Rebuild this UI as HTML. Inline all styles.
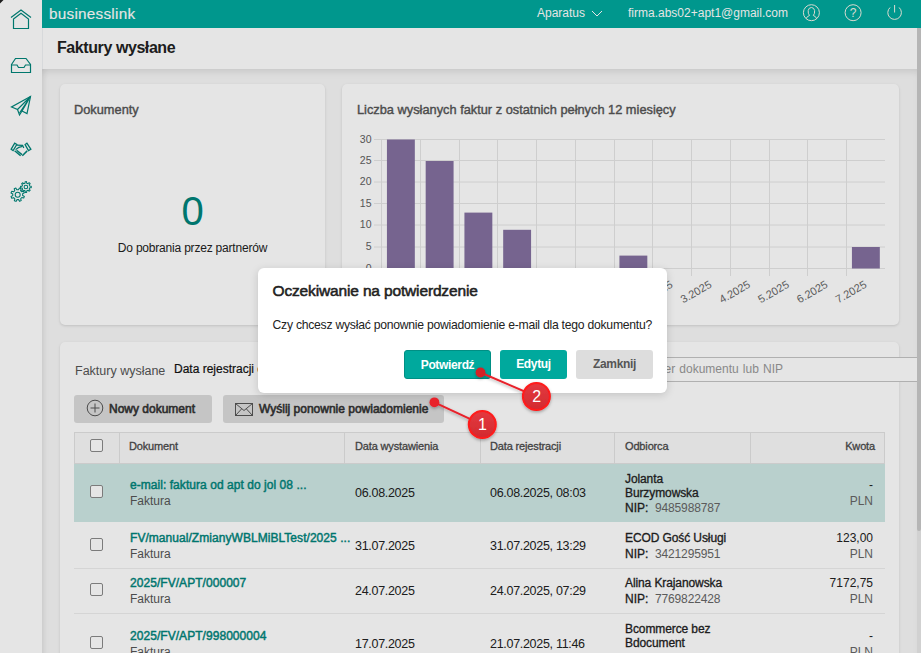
<!DOCTYPE html>
<html><head><meta charset="utf-8">
<style>
*{box-sizing:border-box;margin:0;padding:0}
html,body{width:921px;height:653px;overflow:hidden}
body{position:relative;background:#f6f6f6;font-family:"Liberation Sans",sans-serif;color:#222}
.abs{position:absolute}
.t{position:absolute;white-space:nowrap}
.m{-webkit-text-stroke:0.35px currentColor}
#sidebar{left:0;top:0;width:42px;height:653px;background:#fff}
#header{left:42px;top:0;width:879px;height:28px;background:#00a99d}
#logo{left:49px;top:5px;font-size:15.3px;letter-spacing:0.25px;color:#fff;-webkit-text-stroke:0.15px #fff}
#titlebar{left:42px;top:28px;width:875px;height:41px;background:#fff;border-left:1px solid #f0f2f4}
#title{left:57px;top:39px;font-size:16px;letter-spacing:-0.42px;font-weight:bold;color:#222}
#content{left:42px;top:69px;width:875px;height:584px;background:#f8f8f8;box-shadow:inset 0 6px 8px -4px rgba(0,0,0,.12), inset 8px 0 6px -6px rgba(0,0,0,.08)}
.card{position:absolute;background:#fff;border-radius:5px;box-shadow:0 1px 3px rgba(0,0,0,.14)}
#thumb{left:917px;top:28px;width:4px;height:503px;background:#cacaca;border-radius:0 0 2px 2px}
.h3{position:absolute;font-size:12.8px;-webkit-text-stroke:0.4px #555;color:#555;white-space:nowrap}
#overlay{left:0;top:0;width:921px;height:653px;background:rgba(0,0,0,.1)}
#dialog{left:258px;top:268px;width:409px;height:125px;background:#fff;border-radius:6px;box-shadow:0 2px 8px rgba(0,0,0,.15)}
.btn{position:absolute;height:29px;border-radius:3px;font-size:12px;font-weight:bold;letter-spacing:-0.35px;text-align:center;line-height:29px;white-space:nowrap}
.teal{background:#00a99d;color:#fff}
svg text{font-family:"Liberation Sans",sans-serif}
.g{stroke:#e6e6e6;stroke-width:1}
.yl{font-size:10.5px;fill:#606060;text-anchor:end}
.xl{font-size:11px;fill:#666;text-anchor:end;dominant-baseline:middle}
.b{fill:#8470a0}
.cb{position:absolute;width:13px;height:13px;border:1px solid #8a8a8a;border-radius:2px;background:#fff}
.th{position:absolute;top:440px;font-size:11px;letter-spacing:-0.15px;-webkit-text-stroke:0.3px #4a4a4a;color:#4a4a4a;white-space:nowrap}
.link{font-size:12px;letter-spacing:0.05px;color:#00847b;-webkit-text-stroke:0.45px #00847b}
.sub{font-size:12px;color:#555}
.cell{font-size:12.5px;letter-spacing:-0.3px;color:#222}
.nm{font-size:12px;letter-spacing:-0.1px;color:#222;-webkit-text-stroke:0.3px #222;line-height:14px}
.nip{font-size:12px;color:#222}
.nip b{font-weight:normal;-webkit-text-stroke:0.3px #222}
.nip span{color:#666;letter-spacing:-0.15px;margin-left:0px}
.amt{font-size:12px;color:#222;text-align:right;width:123px;left:750px}
.amt span{color:#666}
</style></head><body>
<div id="sidebar" class="abs">
 <svg class="abs" style="left:0;top:0" width="42" height="220" viewBox="0 0 42 220" fill="none" stroke="#00857a" stroke-width="1.2">
  <path d="M0 0 L3.5 0 L0 3.5 Z" fill="#222" stroke="none"/>
  <path d="M11 17.5 L21 10 L31 17.5"/>
  <path d="M13.5 19 L21 13.3 L28.5 19 V28.5 H13.5 Z"/>
  <path d="M11.5 64.5 L15.5 58.5 H26 L30.5 64.5 V72.5 H11.5 Z"/>
  <path d="M11.5 65 H17 L18.5 67.5 H24 L25.5 65 H30.5"/>
  <path d="M30.5 96.5 L11.5 107 L17.5 109.5 L19.5 115 L22 111 L27 113.5 Z"/>
  <path d="M30.5 96.5 L17.5 109.5 M30.5 96.5 L19.5 113 M30.5 96.5 L22 111"/>
  <path d="M11.2 149.2 L14.7 143.2 L16.8 144.5 L13.1 150.5 Z M30.8 149.2 L26.9 143.2 L25.1 144.6 L28.5 150.5 Z" stroke-width="1.3"/>
  <path d="M16.8 145.1 L22.6 145.4 L23.8 148"/>
  <path d="M15.6 149.6 Q18.5 146.8 22.6 146.4"/>
  <path d="M14.6 150.8 L20.6 155.8 M16.6 150.2 L22 154.6" stroke-width="1.4"/>
  <path d="M27.2 150.9 L22.3 155.8" stroke-width="1.5"/>
  <g stroke-width="1.05"><path d="M18.48 189.76 L19.42 188.02 L21.07 188.68 L20.54 190.59 L21.75 191.76 L23.64 191.19 L24.34 192.83 L22.62 193.80 L22.64 195.48 L24.38 196.42 L23.72 198.07 L21.81 197.54 L20.64 198.75 L21.21 200.64 L19.57 201.34 L18.60 199.62 L16.92 199.64 L15.98 201.38 L14.33 200.72 L14.86 198.81 L13.65 197.64 L11.76 198.21 L11.06 196.57 L12.78 195.60 L12.76 193.92 L11.02 192.98 L11.68 191.33 L13.59 191.86 L14.76 190.65 L14.19 188.76 L15.83 188.06 L16.80 189.78 Z" stroke-linejoin="round"/><circle cx="17.7" cy="194.7" r="2.5"/></g><g stroke-width="1.05"><path d="M24.99 183.21 L25.14 181.65 L26.53 181.64 L26.72 183.19 L27.94 183.67 L29.14 182.68 L30.14 183.66 L29.18 184.88 L29.69 186.09 L31.25 186.24 L31.26 187.63 L29.71 187.82 L29.23 189.04 L30.22 190.24 L29.24 191.24 L28.02 190.28 L26.81 190.79 L26.66 192.35 L25.27 192.36 L25.08 190.81 L23.86 190.33 L22.66 191.32 L21.66 190.34 L22.62 189.12 L22.11 187.91 L20.55 187.76 L20.54 186.37 L22.09 186.18 L22.57 184.96 L21.58 183.76 L22.56 182.76 L23.78 183.72 Z" stroke-linejoin="round"/><circle cx="25.9" cy="187" r="1.8"/></g>
 </svg>
</div>
<div id="header" class="abs"></div>
<div id="logo" class="abs">businesslink</div>
<div class="t" style="left:537px;top:6px;font-size:12px;color:#fff">Aparatus</div>
<svg class="abs" style="left:590px;top:8px" width="14" height="10"><path d="M2 3 L7 8 L12 3" fill="none" stroke="#fff" stroke-width="1"/></svg>
<div class="t" style="left:628px;top:6px;font-size:12px;color:#fff">firma.abs02+apt1@gmail.com</div>
<svg class="abs" style="left:795px;top:0" width="126" height="28" fill="none" stroke="#f4f4e8" stroke-width="1">
 <circle cx="16.4" cy="12.7" r="8"/>
 <path d="M11.2 18.6 Q12 16.2 14.5 15.5 Q12.8 13.5 13.2 10.5 Q13.8 7.5 16.4 7.5 Q19 7.5 19.6 10.5 Q20 13.5 18.3 15.5 Q20.8 16.2 21.6 18.6"/>
 <circle cx="58.1" cy="12.7" r="8"/>
 <text x="58.1" y="17" font-size="12" text-anchor="middle" fill="#f4f4e8" stroke="none">?</text>
 <path d="M95.1 7.5 A6.8 6.8 0 1 0 104.1 7.5"/>
 <path d="M99.6 5 V12.5"/>
</svg>
<div id="titlebar" class="abs"></div>
<div id="title" class="abs">Faktury wysłane</div>
<div id="content" class="abs"></div>
<div class="abs" style="left:917px;top:28px;width:4px;height:625px;background:#e9e9e9"></div>
<div id="thumb" class="abs"></div>

<div class="card" style="left:60px;top:84px;width:265px;height:241px"></div>
<div class="h3" style="left:74px;top:102px">Dokumenty</div>
<div class="t" style="left:60px;width:265px;top:189px;text-align:center;font-size:40px;color:#00847b">0</div>
<div class="t" style="left:60px;width:265px;top:241px;text-align:center;font-size:12px;letter-spacing:-0.2px;color:#222">Do pobrania przez partnerów</div>

<div class="card" style="left:342px;top:84px;width:557px;height:241px"></div>
<div class="h3" style="left:357px;top:102px">Liczba wysłanych faktur z ostatnich pełnych 12 miesięcy</div>
<svg class="abs" style="left:0;top:0" width="921" height="653">
<line x1="374" y1="139.5" x2="885" y2="139.5" class="g"/>
<text x="371.5" y="142.5" class="yl">30</text>
<line x1="374" y1="160.5" x2="885" y2="160.5" class="g"/>
<text x="371.5" y="163.5" class="yl">25</text>
<line x1="374" y1="182" x2="885" y2="182" class="g"/>
<text x="371.5" y="185" class="yl">20</text>
<line x1="374" y1="203.5" x2="885" y2="203.5" class="g"/>
<text x="371.5" y="206.5" class="yl">15</text>
<line x1="374" y1="225" x2="885" y2="225" class="g"/>
<text x="371.5" y="228" class="yl">10</text>
<line x1="374" y1="247" x2="885" y2="247" class="g"/>
<text x="371.5" y="250" class="yl">5</text>
<line x1="374" y1="268.5" x2="885" y2="268.5" class="g"/>
<text x="371.5" y="271.5" class="yl">0</text>
<line x1="381.5" y1="139" x2="381.5" y2="276" class="g"/>
<line x1="420.5" y1="139" x2="420.5" y2="276" class="g"/>
<line x1="459.5" y1="139" x2="459.5" y2="276" class="g"/>
<line x1="497.5" y1="139" x2="497.5" y2="276" class="g"/>
<line x1="536.5" y1="139" x2="536.5" y2="276" class="g"/>
<line x1="575.5" y1="139" x2="575.5" y2="276" class="g"/>
<line x1="614.5" y1="139" x2="614.5" y2="276" class="g"/>
<line x1="652.5" y1="139" x2="652.5" y2="276" class="g"/>
<line x1="691.5" y1="139" x2="691.5" y2="276" class="g"/>
<line x1="730.5" y1="139" x2="730.5" y2="276" class="g"/>
<line x1="769.5" y1="139" x2="769.5" y2="276" class="g"/>
<line x1="807.5" y1="139" x2="807.5" y2="276" class="g"/>
<line x1="846.5" y1="139" x2="846.5" y2="276" class="g"/>
<rect x="386.93" y="139.5" width="27.9" height="129.0" class="b"/>
<rect x="425.68" y="161.0" width="27.9" height="107.5" class="b"/>
<rect x="464.43" y="212.6" width="27.9" height="55.9" class="b"/>
<rect x="503.18" y="229.8" width="27.9" height="38.7" class="b"/>
<rect x="619.42" y="255.6" width="27.9" height="12.9" class="b"/>
<rect x="851.92" y="247.0" width="27.9" height="21.5" class="b"/>
<text transform="translate(401.0,284.2) rotate(-30)" class="xl">7.2024</text>
<text transform="translate(439.7,284.2) rotate(-30)" class="xl">8.2024</text>
<text transform="translate(478.5,284.2) rotate(-30)" class="xl">9.2024</text>
<text transform="translate(517.2,284.2) rotate(-30)" class="xl">10.2024</text>
<text transform="translate(556.0,284.2) rotate(-30)" class="xl">11.2024</text>
<text transform="translate(594.7,284.2) rotate(-30)" class="xl">12.2024</text>
<text transform="translate(633.5,284.2) rotate(-30)" class="xl">1.2025</text>
<text transform="translate(672.2,284.2) rotate(-30)" class="xl">2.2025</text>
<text transform="translate(711.0,284.2) rotate(-30)" class="xl">3.2025</text>
<text transform="translate(749.7,284.2) rotate(-30)" class="xl">4.2025</text>
<text transform="translate(788.5,284.2) rotate(-30)" class="xl">5.2025</text>
<text transform="translate(827.2,284.2) rotate(-30)" class="xl">6.2025</text>
<text transform="translate(866.0,284.2) rotate(-30)" class="xl">7.2025</text>
</svg>

<div class="card" style="left:60px;top:342px;width:839px;height:330px"></div>
<div class="t" style="left:75px;top:364px;font-size:12.5px;color:#555">Faktury wysłane</div>
<div class="t" style="left:174px;top:362px;font-size:12px;color:#111;-webkit-text-stroke:0.2px #111">Data rejestracji od</div>
<div class="abs" style="left:640px;top:357px;width:277px;height:25px;background:#fff;border-top:1px solid #c4c4c4;border-bottom:1px solid #c4c4c4"></div>
<div class="t" style="left:580px;width:203px;text-align:right;top:362px;font-size:12px;word-spacing:0.8px;color:#999">po numer dokumentu lub NIP</div>

<div class="btn m" style="left:74px;top:395px;width:138px;height:28px;line-height:28px;background:#dcdcdc;color:#333;text-align:left;padding-left:35px;font-weight:normal;letter-spacing:0;font-size:12px;-webkit-text-stroke:0.6px #333">Nowy dokument</div>
<svg class="abs" style="left:86px;top:399px" width="18" height="18" fill="none" stroke="#555" stroke-width="1"><circle cx="9" cy="9" r="7.8"/><path d="M9 4.5 V13.5 M4.5 9 H13.5"/></svg>
<div class="btn m" style="left:223px;top:395px;width:221px;height:28px;line-height:28px;background:#dcdcdc;color:#333;text-align:left;padding-left:36px;font-weight:normal;letter-spacing:0;font-size:12px;-webkit-text-stroke:0.6px #333">Wyślij ponownie powiadomienie</div>
<svg class="abs" style="left:235px;top:403px" width="19" height="14" fill="none" stroke="#555" stroke-width="1"><rect x="0.5" y="0.5" width="17" height="12"/><path d="M0.5 0.5 L9 7.5 L17.5 0.5 M0.5 12.5 L6.5 6 M17.5 12.5 L11.5 6"/></svg>

<!-- table -->
<div class="abs" style="left:74px;top:432px;width:811px;height:32px;background:#f9f9f9;border:1px solid #e2e2e2"></div>
<div class="abs" style="left:119px;top:433px;width:1px;height:31px;background:#e2e2e2"></div>
<div class="abs" style="left:344px;top:433px;width:1px;height:31px;background:#e2e2e2"></div>
<div class="abs" style="left:480px;top:433px;width:1px;height:31px;background:#e2e2e2"></div>
<div class="abs" style="left:614px;top:433px;width:1px;height:31px;background:#e2e2e2"></div>
<div class="abs" style="left:750px;top:433px;width:1px;height:31px;background:#e2e2e2"></div>
<div class="cb" style="left:90px;top:439px"></div>
<div class="th" style="left:129px">Dokument</div>
<div class="th" style="left:355px">Data wystawienia</div>
<div class="th" style="left:490px">Data rejestracji</div>
<div class="th" style="left:625px">Odbiorca</div>
<div class="th" style="left:750px;width:125px;text-align:right">Kwota</div>

<div class="abs" style="left:74px;top:464px;width:811px;height:58px;background:#cfe8e5"></div>
<div class="abs" style="left:74px;top:568px;width:811px;height:1px;background:#eee"></div>
<div class="abs" style="left:74px;top:613px;width:811px;height:1px;background:#eee"></div>

<div class="cb" style="left:90px;top:485px"></div>
<div class="t link" style="left:130px;top:478px">e-mail: faktura od apt do jol 08 ...</div>
<div class="t sub" style="left:130px;top:494px">Faktura</div>
<div class="t cell" style="left:355px;top:486px">06.08.2025</div>
<div class="t cell" style="left:490px;top:486px">06.08.2025, 08:03</div>
<div class="t nm" style="left:625px;top:472px">Jolanta<br>Burzymowska</div>
<div class="t nip" style="left:625px;top:501px"><b>NIP:</b>&nbsp; <span>9485988787</span></div>
<div class="t amt" style="top:477px;line-height:16px">-<br><span>PLN</span></div>

<div class="cb" style="left:90px;top:538px"></div>
<div class="t link" style="left:130px;top:531px">FV/manual/ZmianyWBLMiBLTest/2025 ...</div>
<div class="t sub" style="left:130px;top:547px">Faktura</div>
<div class="t cell" style="left:355px;top:539px">31.07.2025</div>
<div class="t cell" style="left:490px;top:539px">31.07.2025, 13:29</div>
<div class="t nm" style="left:625px;top:531px">ECOD Gość Usługi</div>
<div class="t nip" style="left:625px;top:547px"><b>NIP:</b>&nbsp; <span>3421295951</span></div>
<div class="t amt" style="top:530px;line-height:16px">123,00<br><span>PLN</span></div>

<div class="cb" style="left:90px;top:583px"></div>
<div class="t link" style="left:130px;top:576px">2025/FV/APT/000007</div>
<div class="t sub" style="left:130px;top:592px">Faktura</div>
<div class="t cell" style="left:355px;top:584px">24.07.2025</div>
<div class="t cell" style="left:490px;top:584px">24.07.2025, 07:29</div>
<div class="t nm" style="left:625px;top:576px">Alina Krajanowska</div>
<div class="t nip" style="left:625px;top:592px"><b>NIP:</b>&nbsp; <span>7769822428</span></div>
<div class="t amt" style="top:575px;line-height:16px">7172,75<br><span>PLN</span></div>

<div class="cb" style="left:90px;top:636px"></div>
<div class="t link" style="left:130px;top:629px">2025/FV/APT/998000004</div>
<div class="t sub" style="left:130px;top:645px">Faktura</div>
<div class="t cell" style="left:355px;top:637px">17.07.2025</div>
<div class="t cell" style="left:490px;top:637px">21.07.2025, 11:46</div>
<div class="t nm" style="left:625px;top:622px">Bcommerce bez<br>Bdocument</div>
<div class="t amt" style="top:628px;line-height:16px">-<br><span>PLN</span></div>

<div id="overlay" class="abs"></div>

<div id="dialog" class="abs"></div>
<div class="t" style="left:272.5px;top:282px;font-size:15.5px;letter-spacing:-0.15px;color:#222;-webkit-text-stroke:0.55px #222">Oczekiwanie na potwierdzenie</div>
<div class="t" style="left:272.5px;top:318px;font-size:12.2px;letter-spacing:-0.25px;color:#222">Czy chcesz wysłać ponownie powiadomienie e-mail dla tego dokumentu?</div>
<div class="btn teal" style="left:404px;top:350px;width:87px;border:1px solid #008f84">Potwierdź</div>
<div class="btn teal" style="left:500px;top:350px;width:67px">Edytuj</div>
<div class="btn" style="left:576px;top:350px;width:77px;background:#ddd;color:#555">Zamknij</div>

<svg class="abs" style="left:0;top:0" width="921" height="653">
 <defs>
  <linearGradient id="rg" x1="0" y1="0" x2="0" y2="1"><stop offset="0" stop-color="#e4393f"/><stop offset="1" stop-color="#d22a30"/></linearGradient>
  <filter id="sh" x="-50%" y="-50%" width="200%" height="200%"><feDropShadow dx="0" dy="1.5" stdDeviation="1.5" flood-color="#000" flood-opacity="0.3"/></filter>
 </defs>
 <g filter="url(#sh)">
 <line x1="480.5" y1="372.5" x2="536.3" y2="396.5" stroke="#e8202a" stroke-width="2"/>
 <line x1="434.4" y1="402.3" x2="482.3" y2="424.6" stroke="#e8202a" stroke-width="2"/>
 <circle cx="480.5" cy="372.5" r="4.9" fill="#d42126"/>
 <circle cx="434.4" cy="402.3" r="4.9" fill="#e8202a"/>
 <circle cx="536.4" cy="396.5" r="13.5" fill="url(#rg)" stroke="#ff1a1a" stroke-width="2"/>
 <circle cx="482.3" cy="424.6" r="13.5" fill="url(#rg)" stroke="#ff1a1a" stroke-width="2"/>
 </g>
 <text x="536.6" y="402.2" font-size="16" fill="#fff" text-anchor="middle">2</text>
 <text x="482.5" y="430.3" font-size="16" fill="#fff" text-anchor="middle">1</text>
</svg>
</body></html>
